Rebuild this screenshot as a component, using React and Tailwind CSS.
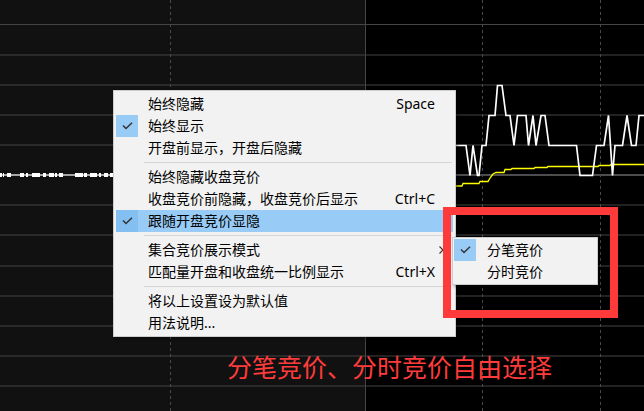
import React from "react";

const blobs = [
  [0, 2], [3, 4], [7, 11], [20, 24], [26, 28], [32, 40], [43, 46], [49, 54],
  [55, 57], [59, 63], [75, 83], [84, 87], [90, 97], [99, 101], [104, 108], [110, 113],
];

const hLines = [24.5, 55, 85, 115, 145, 205, 235, 266, 296, 326, 356, 386];

const whitePts = [
  [440, 145.5], [466, 145.5], [470, 175.5], [473, 145.5], [477.5, 175.5], [479, 175.5],
  [482, 145.5], [486, 145.5], [489, 115.5], [495, 115.5], [497.5, 85.5], [502, 85.5],
  [506, 115.5], [510, 115.5], [514, 145.5], [517.5, 115.5], [526, 115.5], [528.5, 145.5],
  [533, 115.5], [536, 145.5], [541, 115.5], [545, 115.5], [549, 145.5], [576.5, 145.5],
  [580, 175.5], [592.5, 175.5], [596.5, 145.5], [604, 145.5], [608.5, 115.5],
  [612.5, 175.5], [615, 145.5], [622.5, 145.5], [627, 115.5], [631.5, 145.5],
  [636, 145.5], [639, 115.5], [645, 115.5],
];

const yellowPts = [
  [440, 186], [462, 186], [463, 183.5], [479, 183.5], [480, 181.5], [488, 181.5],
  [490, 178], [493, 174], [496, 172.5], [504, 172.5], [505, 169.5], [511, 169.5],
  [512, 168.5], [534, 168.5], [535, 167.5], [547, 167.5], [548, 166.5], [598, 166.5],
  [599, 165.5], [610, 165.5], [611, 164.5], [645, 164.5],
];

const toPts = (a) => a.map((p) => p.join(",")).join(" ");

function Chart() {
  return (
    <svg width="644" height="411" viewBox="0 0 644 411" className="block">
      <rect x="0" y="0" width="366" height="411" fill="#111111" />
      <rect x="366" y="0" width="278" height="411" fill="#000000" />
      {hLines.map((y) => (
        <line key={y} x1="0" x2="644" y1={y} y2={y} stroke="#454545" strokeWidth="1" />
      ))}
      <line x1="0" x2="644" y1="175" y2="175" stroke="#4d4d4d" strokeWidth="2" />
      <line x1="365.5" x2="365.5" y1="0" y2="411" stroke="#454545" strokeWidth="1" />
      {[170.5, 482.5, 600.5].map((x) => (
        <line key={x} x1={x} x2={x} y1="0" y2="411" stroke="#4a4a4a" strokeWidth="1" strokeDasharray="3 3" />
      ))}
      <line x1="0" x2="114" y1="175" y2="175" stroke="#ffffff" strokeWidth="1" />
      {blobs.map(([a, b]) => (
        <rect key={a} x={a} y="173" width={b - a} height="4" fill="#ffffff" />
      ))}
      <polyline points={toPts(yellowPts)} fill="none" stroke="#ffff00" strokeWidth="1.3" />
      <polyline points={toPts(whitePts)} fill="none" stroke="#ffffff" strokeWidth="1.7" strokeLinejoin="miter" />
    </svg>
  );
}

function Check() {
  return (
    <svg width="11" height="8" viewBox="0 0 11 8">
      <path d="M1 3.5 L4 6.5 L10 0.8" fill="none" stroke="#333333" strokeWidth="1.5" />
    </svg>
  );
}

function Item({ label, shortcut, checked, hover, arrow }) {
  return (
    <div className={`flex h-[22px] items-center ${hover ? "bg-[#99cbf7]" : ""}`}>
      <div
        className={`flex h-[22px] w-[22px] shrink-0 items-center justify-center ${
          checked ? (hover ? "bg-[#84bff2]" : "bg-[#99cbf7]") : ""
        }`}
      >
        {checked ? <Check /> : null}
      </div>
      <span className="ml-[10px] flex-1 whitespace-nowrap leading-[22px]">{label}</span>
      {shortcut ? <span className="mr-[18px] whitespace-nowrap leading-[22px]">{shortcut}</span> : null}
      {arrow ? (
        <span className="mr-[9px] flex items-center">
          <svg width="5" height="8" viewBox="0 0 5 8">
            <path d="M0.5 0.5 L4 4 L0.5 7.5" fill="none" stroke="#333" strokeWidth="1.1" />
          </svg>
        </span>
      ) : null}
    </div>
  );
}

function Sep() {
  return <div className="ml-[28px] mr-[1px] my-[3px] h-px bg-[#d5d5d5]" />;
}

export default function App() {
  return (
    <div className="relative h-[411px] w-[644px] overflow-hidden bg-black font-['Noto_Sans','Noto_Sans_CJK_SC',sans-serif] text-[14px] text-black">
      <Chart />

      <div className="absolute left-[113px] top-[90px] w-[343px] border border-[#cccccc] bg-[#f2f2f2] px-[2px] py-[2px] shadow-[2px_2px_3px_rgba(0,0,0,0.35)]">
        <Item label="始终隐藏" shortcut="Space" />
        <Item label="始终显示" checked />
        <Item label="开盘前显示，开盘后隐藏" />
        <Sep />
        <Item label="始终隐藏收盘竞价" />
        <Item label="收盘竞价前隐藏，收盘竞价后显示" shortcut="Ctrl+C" />
        <Item label="跟随开盘竞价显隐" checked hover />
        <Sep />
        <Item label="集合竞价展示模式" arrow />
        <Item label="匹配量开盘和收盘统一比例显示" shortcut="Ctrl+X" />
        <Sep />
        <Item label="将以上设置设为默认值" />
        <Item label="用法说明..." />
      </div>

      <div className="absolute left-[443px] top-[207px] h-[111px] w-[175px] border-[8px] border-[#ff3a3a]" />

      <div className="absolute left-[452px] top-[237px] w-[146px] border border-[#cccccc] bg-[#f2f2f2] px-[1px] py-[1px] shadow-[2px_2px_3px_rgba(0,0,0,0.35)]">
        <div className="flex h-[22px] items-center">
          <div className="flex h-[22px] w-[22px] items-center justify-center bg-[#99cbf7]">
            <Check />
          </div>
          <span className="ml-[11px] leading-[22px]">分笔竞价</span>
        </div>
        <div className="flex h-[22px] items-center">
          <div className="h-[22px] w-[22px]" />
          <span className="ml-[11px] leading-[22px]">分时竞价</span>
        </div>
      </div>

      <div className="absolute left-[227px] top-[351px] whitespace-nowrap text-[25px] leading-[32px] text-[#ff3b3b]">
        分笔竞价、分时竞价自由选择
      </div>
    </div>
  );
}
